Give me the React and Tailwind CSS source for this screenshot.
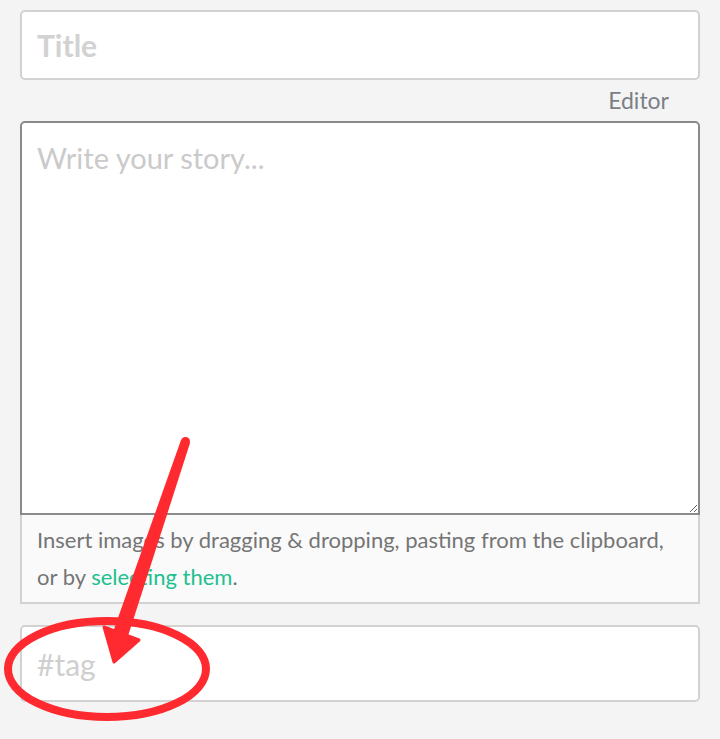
import React, { useState } from 'react';

const Annotation = () => (
    <svg className="absolute left-0 top-0 pointer-events-none" width="720" height="739" viewBox="0 0 720 739">
        <ellipse cx="107" cy="669" rx="99" ry="48" fill="none" stroke="#ff2a2f" strokeWidth="8" />
        <polygon points="181,440 190,443 128,636 113,632" fill="#ff2a2f" />
        <polygon points="104,627 139,640 114,662" fill="#ff2a2f" strokeLinejoin="round" stroke="#ff2a2f" strokeWidth="3" />
        <circle cx="185.5" cy="441.5" r="4.5" fill="#ff2a2f" />
    </svg>
);

const StoryForm = () => {
    const [form, setForm] = useState({ title: '', body: '', tags: '' });

    return (
        <div className="relative w-[720px] h-[739px] bg-[#f4f4f4] overflow-hidden font-['Lato','Open_Sans',sans-serif]">
            <div className="px-5 pt-[10px] flex flex-col">
                <input
                    value={form.title}
                    onChange={(e) => setForm(prev => ({ ...prev, title: e.target.value }))}
                    placeholder="Title"
                    className="w-full h-[70px] px-[15px] rounded-[5px] border-2 border-[#d2d2d2] bg-white text-[30px] font-bold text-[#333] placeholder:text-[#d2d2d2] outline-none"
                />
                <div className="h-[41px] flex items-center justify-end pr-[31px] text-[23px] text-[#7a8087]">Editor</div>
                <textarea
                    value={form.body}
                    onChange={(e) => setForm(prev => ({ ...prev, body: e.target.value }))}
                    placeholder="Write your story..."
                    className="block w-full h-[394px] px-[15px] py-[16px] rounded-t-[5px] border-2 border-[#8a8a8a] bg-white text-[29px] leading-[38px] text-[#333] placeholder:text-[#cacaca] outline-none resize-y"
                />
                <div className="border-2 border-t-0 border-[#d2d2d2] bg-[#fafafa] px-[15px] pt-[6px] pb-[7px] text-[22px] leading-[37px] text-[#757575]">
                    Insert images by dragging &amp; dropping, pasting from the clipboard, or by{' '}
                    <span className="text-[#20c08f]">selecting them</span>.
                </div>
                <input
                    value={form.tags}
                    onChange={(e) => setForm(prev => ({ ...prev, tags: e.target.value }))}
                    placeholder="#tag"
                    className="mt-[21px] w-full h-[77px] px-[15px] rounded-[5px] border-2 border-[#d2d2d2] bg-white text-[30px] text-[#333] placeholder:text-[#cfcfcf] outline-none"
                />
            </div>
            <Annotation />
        </div>
    );
};

export default function App() {
    return <StoryForm />;
}
